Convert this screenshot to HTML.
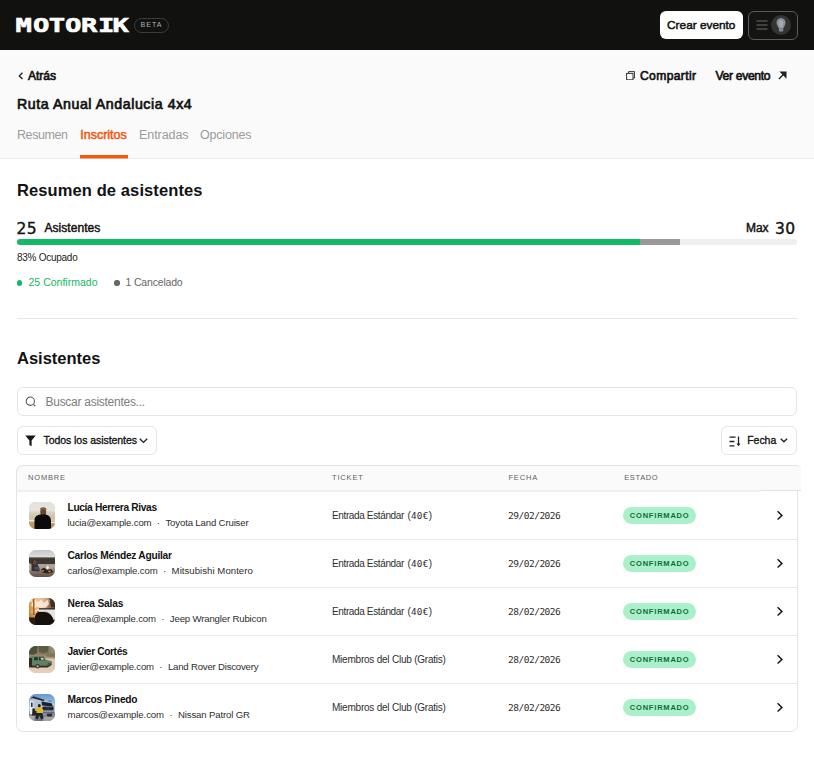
<!DOCTYPE html>
<html lang="es">
<head>
<meta charset="utf-8">
<title>Motorik – Inscritos</title>
<style>
*{box-sizing:border-box;margin:0;padding:0}
html,body{width:814px;height:760px;overflow:hidden;background:#fff}
body{font-family:"Liberation Sans",Arial,sans-serif;color:#121212;position:relative}
.mono{font-family:"DejaVu Sans Mono","Liberation Mono",monospace}
.num{font-family:"DejaVu Sans","Liberation Sans",sans-serif}
svg{display:block}
.md{-webkit-text-stroke:.5px currentColor}
.md3{-webkit-text-stroke:.32px currentColor}
.abs{position:absolute;white-space:nowrap}

/* top bar */
.topbar{position:absolute;left:0;top:0;width:814px;height:50px;background:#111110}
.logo{position:absolute;left:0;top:0;width:200px;height:50px}
.logo text{font-family:"DejaVu Sans Mono","Liberation Mono",monospace;font-weight:700;font-size:18.8px;fill:#fff;stroke:#fff;stroke-width:.55px;stroke-linejoin:miter}
.beta{position:absolute;left:134px;top:17.6px;width:35px;height:15px;border:1px solid #3d3d3b;border-radius:8px;color:#b0b0ae;font-size:7px;line-height:12.4px;text-align:center;white-space:nowrap}
.btn-create{position:absolute;left:660px;top:11px;width:82.5px;height:28px;border-radius:6px;background:#fff;color:#111;font-size:11.8px;line-height:28.8px;text-align:center;white-space:nowrap}
.btn-menu{position:absolute;left:748px;top:11px;width:49.5px;height:28.5px;border-radius:6px;border:1px solid #5c5c5a;background:#141413}
.btn-menu .bars{position:absolute;left:6.5px;top:8.2px}
.btn-menu .av{position:absolute;left:22px;top:2.8px;width:20px;height:20px;border-radius:50%;background:#343432;overflow:hidden}

/* sub header */
.subhead{position:absolute;left:0;top:50px;width:814px;height:109px;background:#fafafa;border-bottom:1px solid #ececec}
.subhead .t{position:absolute;white-space:nowrap;font-size:12.1px;line-height:16px;-webkit-text-stroke:.65px currentColor}
.title{position:absolute;left:17px;top:45.1px;font-size:14.2px;line-height:18px;white-space:nowrap;-webkit-text-stroke:.7px currentColor}
.tabs{position:absolute;left:17px;top:76.6px;height:33px;font-size:12.5px;line-height:16px;white-space:nowrap}
.tabs a{position:absolute;top:0;display:block;color:#9b9b9b;height:33px;text-decoration:none}
.tabs a.on{color:#f2560c}
.tabs .ul{position:absolute;left:63px;top:28.4px;width:48px;height:4px;background:linear-gradient(#f55a0a 0,#f55a0a 3px,#f4a57c 3px,#f4a57c 4px)}

/* main */
h2{position:absolute;left:17px;font-size:16.5px;line-height:22px;font-weight:700;white-space:nowrap}
.bar{position:absolute;left:17px;top:239px;width:780px;height:6px;border-radius:3px;background:#efefef;overflow:hidden}
.bar i{position:absolute;top:0;height:6px}
.hr{position:absolute;left:17px;top:318px;width:780px;height:1px;background:#e6e6e6}
.dotc{position:absolute;width:5.4px;height:5.4px;border-radius:50%}

.search{position:absolute;left:17px;top:387px;width:780px;height:29px;border:1px solid #e5e5e5;border-radius:6px;background:#fff}
.search .ph{position:absolute;left:27.5px;top:7.3px;font-size:12px;line-height:15px;color:#7d7d7d;white-space:nowrap}
.search svg{position:absolute;left:7.2px;top:8.2px}
.fbtn{position:absolute;top:426.4px;height:28.6px;border:1px solid #e5e5e5;border-radius:6px;background:#fff;font-size:10.5px;line-height:14px;white-space:nowrap}
.fbtn .tx{position:absolute;top:5.5px}
.fbtn svg{position:absolute}

/* table */
.tbl{position:absolute;left:16px;top:465px;width:782px;height:267px;border:1px solid #e4e4e4;border-radius:7px}
.thead{position:absolute;left:-1px;top:-1px;width:745px;height:26px;background:#fafafa;border:1px solid #e4e4e4;border-right:none;border-bottom-color:#ededed;border-radius:7px 0 0 0;box-shadow:0 1px 0 #f0f0f0}
.thead2{position:absolute;left:744px;top:-1px;width:40px;height:26px;background:#fafafa;border:1px solid #e4e4e4;border-left:none;border-right:none;border-bottom-color:#e2e2e2;border-radius:0 5px 0 0}
.th{position:absolute;top:7.3px;font-size:7.5px;line-height:10px;color:#5e5e5e;white-space:nowrap}
.row{position:absolute;left:0;width:780px;height:49px;border-bottom:1px solid #e9e9e9}
.row:last-child{border-bottom:none}
.row .avt{position:absolute;left:11.5px;top:11px;width:26.8px;height:26.7px;border-radius:7px;overflow:hidden;background:#bbb}
.row .nm{position:absolute;left:50.5px;top:9.9px;font-size:10.2px;line-height:14px;white-space:nowrap;font-weight:700}
.row .em{position:absolute;left:50.5px;top:25.2px;font-size:9.6px;line-height:13px;color:#2e2e2e;white-space:nowrap}
.row .dot{display:inline-block;width:14px;text-align:center}
.row .tk{position:absolute;left:315px;top:17.5px;font-size:10px;line-height:13px;color:#2e2e2e;white-space:nowrap}
.row .dt{position:absolute;left:491px;top:17.5px;font-size:9.5px;line-height:13px;color:#2e2e2e;white-space:nowrap}
.row .bd{position:absolute;left:606.4px;top:16px;width:72.5px;height:16.8px;border-radius:9px;background:#aaf0c9;color:#136b42;font-size:7.5px;font-weight:700;line-height:17px;text-align:center;white-space:nowrap}
.row .ch{position:absolute;left:758.9px;top:19px}
</style>
</head>
<body>

<header class="topbar">
  <svg class="logo" width="200" height="50" viewBox="0 0 200 50"><text id="logo" y="0" x="10.70 22.77 33.63 44.80 55.88 67.56 77.61" transform="translate(0 32) scale(1.45 1)">MOTORIK</text></svg>
  <div class="beta"><span id="beta" style="letter-spacing:1.044px">BETA</span></div>
  <div class="btn-create md"><span id="crear" style="letter-spacing:0.009px">Crear evento</span></div>
  <div class="btn-menu">
    <svg class="bars" width="12" height="10" viewBox="0 0 12 10"><path d="M0.5 1h11M0.5 5h11M0.5 9h11" stroke="#6d6d6b" stroke-width="1.1" fill="none"/></svg>
    <div class="av"><svg width="20" height="20" viewBox="0 0 20 20"><path d="M10 3C13 3 14.5 5.2 14.5 7.6C14.5 10 13 11.2 12.6 13H7.6C7.2 11.2 5.5 10 5.5 7.6C5.5 5.2 7 3 10 3Z" fill="#8592a0"/><path d="M7.6 7C8.4 5.4 9.4 5 10.4 5.2C11.6 5.4 12.4 6.6 12.4 8C12.2 9.6 11.4 10.6 11.2 12.2H9C8.8 10.8 7.4 9.4 7.6 7Z" fill="#a2abb6"/><rect x="7.9" y="13" width="4.4" height="3.5" rx="1" fill="#8a9099"/><path d="M6.3 8.6C6.6 10.2 7.6 11 8 12.6M13.6 7.4C13.6 9.4 12.6 10.6 12.4 12.4" stroke="#c8863e" stroke-width=".7" fill="none"/><path d="M8.2 14.2H12M8.4 15.4H11.8" stroke="#5d84b8" stroke-width=".6"/></svg></div>
  </div>
</header>

<section class="subhead">
  <svg class="abs" style="left:18.3px;top:21.8px" width="6" height="8" viewBox="0 0 6 8"><path d="M4.5 0.8 L1.3 3.9 L4.5 7" fill="none" stroke="#121212" stroke-width="1.25"/></svg>
  <div class="t" style="left:28px;top:17.8px"><span id="atras" style="letter-spacing:-0.045px">Atrás</span></div>
  <svg class="abs" style="left:625.7px;top:20.7px" width="9.2" height="9.4" viewBox="0 0 9.2 9.4"><path d="M2.6 2.3V0.6H8.6V7H7" fill="none" stroke="#333" stroke-width="1"/><rect x="0.6" y="2.4" width="6.4" height="6.4" fill="none" stroke="#333" stroke-width="1"/></svg>
  <div class="t" style="left:640px;top:18px"><span id="compartir" style="letter-spacing:0.370px">Compartir</span></div>
  <div class="t" style="left:715.5px;top:18px"><span id="verevento" style="letter-spacing:-0.308px">Ver evento</span></div>
  <svg class="abs" style="left:778px;top:20.8px" width="9.4" height="9" viewBox="0 0 10 10"><path d="M1.3 0.6H9.2V8.6Z" fill="#222"/><path d="M0.8 8.9L5.8 3.9" stroke="#222" stroke-width="1.5" fill="none"/></svg>
  <div class="title"><span id="title" style="letter-spacing:0.565px">Ruta Anual Andalucia 4x4</span></div>
  <nav class="tabs">
    <a style="left:0"><span id="tab0" style="letter-spacing:-0.419px">Resumen</span></a>
    <a class="on md" style="left:63.3px"><span id="tab1" style="letter-spacing:-0.007px">Inscritos</span></a>
    <a style="left:122px"><span id="tab2" style="letter-spacing:-0.062px">Entradas</span></a>
    <a style="left:183px"><span id="tab3" style="letter-spacing:-0.203px">Opciones</span></a>
    <div class="ul"></div>
  </nav>
</section>

<main>
  <h2 style="top:179px"><span id="h2a" style="letter-spacing:0.104px">Resumen de asistentes</span></h2>
  <div class="abs num" style="left:16.6px;top:218.6px;font-size:15.5px;line-height:20px;-webkit-text-stroke:.4px currentColor"><span id="n25" style="letter-spacing:0.300px">25</span></div>
  <div class="abs" style="left:44.5px;top:220.3px;font-size:12px;line-height:16px;-webkit-text-stroke:.45px currentColor"><span id="asis" style="letter-spacing:0.043px">Asistentes</span></div>
  <div class="abs" style="left:746px;top:220.3px;font-size:12px;line-height:16px;-webkit-text-stroke:.45px currentColor"><span id="max" style="letter-spacing:-0.060px">Max</span></div>
  <div class="abs num" style="left:775px;top:218.6px;font-size:15.5px;line-height:20px;-webkit-text-stroke:.4px currentColor"><span id="n30" style="letter-spacing:0.300px">30</span></div>
  <div class="bar"><i style="left:0;width:623px;background:#14b866"></i><i style="left:623px;width:40px;background:#999"></i></div>
  <div class="abs" style="left:17px;top:252.3px;font-size:10px;line-height:12px;color:#222"><span id="ocup" style="letter-spacing:-0.268px">83% Ocupado</span></div>
  <div class="dotc" style="left:16.9px;top:280.3px;background:#14b866"></div>
  <div class="abs" style="left:28.5px;top:275.8px;font-size:10.5px;line-height:13px;color:#14b866"><span id="conf" style="letter-spacing:0.010px">25 Confirmado</span></div>
  <div class="dotc" style="left:114.3px;top:280.3px;background:#666"></div>
  <div class="abs" style="left:125.5px;top:275.8px;font-size:10.5px;line-height:13px;color:#666"><span id="canc" style="letter-spacing:-0.176px">1 Cancelado</span></div>
  <div class="hr"></div>

  <h2 style="top:347px"><span id="h2b" style="letter-spacing:-0.007px">Asistentes</span></h2>
  <div class="search">
    <svg width="12" height="12" viewBox="0 0 12 12"><circle cx="5.3" cy="5.2" r="4.15" fill="none" stroke="#555" stroke-width="1.05"/><path d="M8.3 8.2L10.3 10.2" stroke="#555" stroke-width="1.1"/></svg>
    <div class="ph"><span id="ph" style="letter-spacing:-0.270px">Buscar asistentes...</span></div>
  </div>
  <div class="fbtn" style="left:17px;width:140px">
    <svg style="left:6.8px;top:7.7px" width="11" height="12" viewBox="0 0 11 12"><path d="M0.3 0.5H10.7L6.6 5.6V11.2L4.4 9.9V5.6Z" fill="#161616"/></svg>
    <div class="tx md3" style="left:25.5px"><span id="todos" style="letter-spacing:-0.057px">Todos los asistentes</span></div>
    <svg style="left:121px;top:10.3px" width="9" height="6" viewBox="0 0 9 6"><path d="M0.8 0.8L4.5 4.4L8.2 0.8" fill="none" stroke="#222" stroke-width="1.35"/></svg>
  </div>
  <div class="fbtn" style="left:721px;width:76px">
    <svg style="left:7px;top:8.5px" width="12" height="11" viewBox="0 0 12 11"><path d="M0.5 1.2H6.6M0.5 5.5H5.4M0.5 9.8H5.4" stroke="#222" stroke-width="1.3" fill="none"/><path d="M9.5 0.5V9.2" stroke="#222" stroke-width="1.3" fill="none"/><path d="M7.5 7.6L9.5 10.2L11.5 7.6Z" fill="#222"/></svg>
    <div class="tx md3" style="left:25.2px"><span id="fecha" style="letter-spacing:-0.027px">Fecha</span></div>
    <svg style="left:58.3px;top:10.6px" width="8" height="5" viewBox="0 0 8 5"><path d="M0.7 0.7L3.9 3.8L7.1 0.7" fill="none" stroke="#222" stroke-width="1.35"/></svg>
  </div>

  <div class="tbl">
    <div class="thead">
      <div class="th" style="left:11px"><span id="th0" style="letter-spacing:0.814px">NOMBRE</span></div>
      <div class="th" style="left:315px"><span id="th1" style="letter-spacing:0.826px">TICKET</span></div>
      <div class="th" style="left:491.4px"><span id="th2" style="letter-spacing:0.842px">FECHA</span></div>
      <div class="th" style="left:607.2px"><span id="th3" style="letter-spacing:0.641px">ESTADO</span></div>
    </div>
    <div class="thead2"></div>

    <div class="row" style="top:25px">
      <div class="avt"><svg width="27" height="27" viewBox="0 0 27 27" preserveAspectRatio="none"><defs><linearGradient id="a1" x1="0" y1="0" x2="0" y2="1"><stop offset="0" stop-color="#e2e2df"/><stop offset=".3" stop-color="#e6e4df"/><stop offset=".42" stop-color="#d6cdbb"/><stop offset=".58" stop-color="#cfc3a9"/><stop offset=".7" stop-color="#d8cdb6"/><stop offset=".75" stop-color="#c2a16a"/><stop offset="1" stop-color="#b38a4a"/></linearGradient></defs><rect width="27" height="27" fill="url(#a1)"/><rect x="0" y="18.2" width="6" height="1" fill="#f4f1ea"/><rect x="22" y="20" width="5" height="1" fill="#f0ece2"/><path d="M5.5 27V18.5C5.5 14.5 8.5 13 11.5 12.6L13.5 11.5L16.5 12.6C20 13.2 21.8 15 22 19V27Z" fill="#0b0b0c"/><ellipse cx="14.2" cy="9.8" rx="3" ry="3.4" fill="#6a452a"/><path d="M11 7.6C11.2 5.6 13 5 14.6 5.3C16.4 5.6 17.6 6.6 17.8 7.5L14.8 7.9Z" fill="#7a5a36"/><path d="M11.4 10C11.8 13 14.8 13.8 16.6 11L16.2 13.4L12.6 14Z" fill="#120c08"/></svg></div>
      <div class="nm"><span id="nm0" style="letter-spacing:-0.339px">Lucía Herrera Rivas</span></div>
      <div class="em"><span id="em0" style="letter-spacing:-0.152px">lucia@example.com</span><span class="dot" id="dot0">·</span><span id="vh0" style="letter-spacing:-0.148px">Toyota Land Cruiser</span></div>
      <div class="tk"><span id="tk0" style="letter-spacing:-0.369px">Entrada Estándar</span> <span id="tp0" style="margin-left:.9px">(<span class="mono" style="font-size:9.3px;letter-spacing:0.300px">40€</span>)</span></div>
      <div class="dt mono"><span id="dt0" style="letter-spacing:-0.489px">29/02/2026</span></div>
      <div class="bd"><span id="bd0" style="letter-spacing:0.803px">CONFIRMADO</span></div>
      <svg class="ch" width="8" height="11" viewBox="0 0 8 11"><path d="M1.6 1.3 L5.9 5.45 L1.6 9.5" fill="none" stroke="#111" stroke-width="1.45" stroke-linecap="butt" stroke-linejoin="miter"/></svg>
    </div>
    <div class="row" style="top:73px">
      <div class="avt"><svg width="27" height="27" viewBox="0 0 27 27" preserveAspectRatio="none"><defs><linearGradient id="a2" x1="0" y1="0" x2="0" y2="1"><stop offset="0" stop-color="#c0c9cc"/><stop offset=".2" stop-color="#d8d8d5"/><stop offset=".245" stop-color="#eadfd4"/><stop offset=".29" stop-color="#5a544d"/><stop offset=".33" stop-color="#3a3733"/><stop offset=".5" stop-color="#3d3a36"/><stop offset=".54" stop-color="#b0a69e"/><stop offset=".66" stop-color="#aba097"/><stop offset=".78" stop-color="#8a7b70"/><stop offset=".9" stop-color="#6e5e54"/><stop offset="1" stop-color="#65564d"/></linearGradient></defs><rect width="27" height="27" fill="url(#a2)"/><path d="M2.5 21V15C2.8 11.5 4.5 9.8 6 10C7.8 10.2 8.6 12.5 8.8 15L10.5 18V21.5Z" fill="#35322f"/><path d="M0 13H1.2V21H0Z" fill="#c9c2ba" opacity=".7"/><path d="M4.5 10.5C6 9.5 7.6 10.5 7.8 13L6 15L4.2 14Z" fill="#6b4a35"/><path d="M5.5 17H9.6L10 19.6H5.5Z" fill="#3f587a"/><path d="M12 19.5L15 17.5L18 20L22 19L24.5 22L19 23.5L13 22.5Z" fill="#2a2320"/><path d="M17 18L18.8 15.2L20 17.4L19 19.5Z" fill="#f4f0ea"/><path d="M12.5 20.5L14.5 19.8L15 21.5L13 22ZM19 21L21.5 20.3L22 21.8L19.8 22.4Z" fill="#d9742e"/></svg></div>
      <div class="nm"><span id="nm1" style="letter-spacing:-0.248px">Carlos Méndez Aguilar</span></div>
      <div class="em"><span id="em1" style="letter-spacing:-0.128px">carlos@example.com</span><span class="dot" id="dot1">·</span><span id="vh1" style="letter-spacing:0.040px">Mitsubishi Montero</span></div>
      <div class="tk"><span id="tk1" style="letter-spacing:-0.369px">Entrada Estándar</span> <span id="tp1" style="margin-left:.9px">(<span class="mono" style="font-size:9.3px;letter-spacing:0.300px">40€</span>)</span></div>
      <div class="dt mono"><span id="dt1" style="letter-spacing:-0.489px">29/02/2026</span></div>
      <div class="bd"><span id="bd1" style="letter-spacing:0.803px">CONFIRMADO</span></div>
      <svg class="ch" width="8" height="11" viewBox="0 0 8 11"><path d="M1.6 1.3 L5.9 5.45 L1.6 9.5" fill="none" stroke="#111" stroke-width="1.45" stroke-linecap="butt" stroke-linejoin="miter"/></svg>
    </div>
    <div class="row" style="top:121px">
      <div class="avt"><svg width="27" height="27" viewBox="0 0 27 27" preserveAspectRatio="none"><defs><linearGradient id="a3" x1="0" y1="0" x2="1" y2="0"><stop offset="0" stop-color="#c9781c"/><stop offset=".25" stop-color="#e8aa62"/><stop offset=".55" stop-color="#d49a5c"/><stop offset=".8" stop-color="#6a4526"/><stop offset="1" stop-color="#2a1c12"/></linearGradient><linearGradient id="a3b" x1="0" y1="0" x2="0" y2="1"><stop offset="0" stop-color="#fff" stop-opacity=".3"/><stop offset=".4" stop-color="#fff" stop-opacity=".15"/><stop offset="1" stop-color="#000" stop-opacity=".3"/></linearGradient></defs><rect width="27" height="27" fill="url(#a3)"/><rect width="27" height="27" fill="url(#a3b)"/><path d="M5.5 1L9 4L12 1.5L15 5L18.5 1.5L20 6L17 9.5L12 10L8 9L5 10.5L2 7Z" fill="#fdf3e4" opacity=".8"/><circle cx="2" cy="3" r="1.1" fill="#fff" opacity=".7"/><circle cx="7" cy="13" r="1.3" fill="#fff" opacity=".6"/><circle cx="20.5" cy="2.5" r="1" fill="#fff" opacity=".6"/><circle cx="3" cy="14" r="1" fill="#f0c890" opacity=".8"/><path d="M20 0H27V9H22Z" fill="#2a1a0e" opacity=".7"/><rect x="4" y="1" width="1.5" height="16" fill="#a85e14"/><path d="M8 11H27V22H24.5C22.5 16 19 13.6 15 13.6H8Z" fill="#e4e4e1"/><path d="M10 10.2H27V11.4H10Z" fill="#26262a"/><path d="M6 27V20C6 16 8 14 10.5 14H15C20 14 23 18 24.6 22L25.6 27Z" fill="#15110e"/><path d="M0 19.5H6.5V27H0Z" fill="#2a1d12"/><circle cx="8.8" cy="13.6" r=".8" fill="#d02a1a"/></svg></div>
      <div class="nm"><span id="nm2" style="letter-spacing:-0.198px">Nerea Salas</span></div>
      <div class="em"><span id="em2" style="letter-spacing:-0.177px">nerea@example.com</span><span class="dot" id="dot2">·</span><span id="vh2" style="letter-spacing:-0.159px">Jeep Wrangler Rubicon</span></div>
      <div class="tk"><span id="tk2" style="letter-spacing:-0.369px">Entrada Estándar</span> <span id="tp2" style="margin-left:.9px">(<span class="mono" style="font-size:9.3px;letter-spacing:0.300px">40€</span>)</span></div>
      <div class="dt mono"><span id="dt2" style="letter-spacing:-0.489px">28/02/2026</span></div>
      <div class="bd"><span id="bd2" style="letter-spacing:0.803px">CONFIRMADO</span></div>
      <svg class="ch" width="8" height="11" viewBox="0 0 8 11"><path d="M1.6 1.3 L5.9 5.45 L1.6 9.5" fill="none" stroke="#111" stroke-width="1.45" stroke-linecap="butt" stroke-linejoin="miter"/></svg>
    </div>
    <div class="row" style="top:169px">
      <div class="avt"><svg width="27" height="27" viewBox="0 0 27 27" preserveAspectRatio="none"><defs><linearGradient id="a4" x1="0" y1="0" x2="0" y2="1"><stop offset="0" stop-color="#6f6a58"/><stop offset=".3" stop-color="#8a7e66"/><stop offset=".42" stop-color="#a79378"/><stop offset=".5" stop-color="#dcc6ae"/><stop offset="1" stop-color="#e4d0bc"/></linearGradient></defs><rect width="27" height="27" fill="url(#a4)"/><path d="M0 0H8V7L4 9L0 8Z" fill="#3f4a36" opacity=".85"/><path d="M10 0H19V6L14 7.5L10 6Z" fill="#55583f" opacity=".8"/><path d="M20 1H27V8L22 7Z" fill="#a08a80" opacity=".8"/><path d="M16 7H27V11.5L18 10.5Z" fill="#7d7a58"/><path d="M0.5 11L2.5 10H14.5L17 13.8L22.8 15.2L23.2 18.8L21.5 19.8H1Z" fill="#5e8262"/><path d="M5.2 11.3H8.8V14.2H5.2ZM10 11.3H14L16 14.2H10Z" fill="#26302a"/><path d="M11.5 11.8H14L15.2 13.8H12Z" fill="#d9c9a0"/><path d="M0 12H3V20.5H0Z" fill="#2c2a22"/><path d="M0 19.5H21L19 21.5H0Z" fill="#3a2a1e"/><circle cx="8.6" cy="20.3" r="2.3" fill="#3a3a38"/><circle cx="8.6" cy="20.3" r="1.1" fill="#b9b6b0"/><circle cx="20.2" cy="18.6" r="1.9" fill="#4a4a46"/></svg></div>
      <div class="nm"><span id="nm3" style="letter-spacing:-0.372px">Javier Cortés</span></div>
      <div class="em"><span id="em3" style="letter-spacing:-0.183px">javier@example.com</span><span class="dot" id="dot3">·</span><span id="vh3" style="letter-spacing:-0.199px">Land Rover Discovery</span></div>
      <div class="tk"><span id="tk3" style="letter-spacing:-0.223px">Miembros del Club (Gratis)</span></div>
      <div class="dt mono"><span id="dt3" style="letter-spacing:-0.489px">28/02/2026</span></div>
      <div class="bd"><span id="bd3" style="letter-spacing:0.803px">CONFIRMADO</span></div>
      <svg class="ch" width="8" height="11" viewBox="0 0 8 11"><path d="M1.6 1.3 L5.9 5.45 L1.6 9.5" fill="none" stroke="#111" stroke-width="1.45" stroke-linecap="butt" stroke-linejoin="miter"/></svg>
    </div>
    <div class="row" style="top:217px">
      <div class="avt"><svg width="27" height="27" viewBox="0 0 27 27" preserveAspectRatio="none"><defs><linearGradient id="a5" x1="0" y1="0" x2="0" y2="1"><stop offset="0" stop-color="#6398d2"/><stop offset=".35" stop-color="#9fc0e4"/><stop offset=".6" stop-color="#cbd3dc"/><stop offset=".72" stop-color="#8c8f96"/><stop offset="1" stop-color="#6d717a"/></linearGradient></defs><rect width="27" height="27" fill="url(#a5)"/><path d="M1 5L4 2.5L14 5L21 8.5L25.5 11L25 18L22 19.5H7L1 16Z" fill="#b4c2d6"/><path d="M1 4.6L4.5 2.2L15.5 5.8L15 7.2L4 4.2Z" fill="#1f2a3a"/><path d="M12.5 7.6L22.5 9.3L24 12.4L13 11.4Z" fill="#1c222c"/><path d="M14 12.6H24.6V16.5H14Z" fill="#2b323e"/><path d="M1 7H4.5V20H1Z" fill="#e8edf4"/><path d="M2 8.5H3.6V13H2Z" fill="#2a3340"/><path d="M3.5 14.5C5 13.5 6.5 15 6.5 18V21.5H3Z" fill="#20242c"/><path d="M18 19.5H23V22L20.5 22.8L18 22Z" fill="#262a32"/><path d="M13 13.5H17V14.8H13ZM21.5 14H24V15.2H21.5Z" fill="#14181e"/><path d="M19.5 6.2H22.5V8H19.5Z" fill="#5a9a94"/><ellipse cx="10.3" cy="11.8" rx="1.5" ry="1.8" fill="#2a1c14"/><path d="M6.5 15.5C7 13.8 9 13.4 10.5 13.6C12.5 13.6 13.8 14.2 14 16L13.5 19H7.2Z" fill="#e3b81e"/><path d="M7 19H13.5L14.5 24.5L12 25.5L10.5 21.5L8.5 25.5L6.5 24.5Z" fill="#1d2230"/><path d="M0 22H6L5 27H0ZM15 23H27V27H14Z" fill="#c8bfb2" opacity=".6"/><path d="M5 17H7.5V21H4.5Z" fill="#20242c"/><path d="M14 17.5H25V19.5H14Z" fill="#5f6b7c"/></svg>
</div>
      <div class="nm"><span id="nm4" style="letter-spacing:-0.197px">Marcos Pinedo</span></div>
      <div class="em"><span id="em4" style="letter-spacing:-0.097px">marcos@example.com</span><span class="dot" id="dot4">·</span><span id="vh4" style="letter-spacing:-0.148px">Nissan Patrol GR</span></div>
      <div class="tk"><span id="tk4" style="letter-spacing:-0.223px">Miembros del Club (Gratis)</span></div>
      <div class="dt mono"><span id="dt4" style="letter-spacing:-0.489px">28/02/2026</span></div>
      <div class="bd"><span id="bd4" style="letter-spacing:0.803px">CONFIRMADO</span></div>
      <svg class="ch" width="8" height="11" viewBox="0 0 8 11"><path d="M1.6 1.3 L5.9 5.45 L1.6 9.5" fill="none" stroke="#111" stroke-width="1.45" stroke-linecap="butt" stroke-linejoin="miter"/></svg>
    </div>
  </div>
</main>
</body>
</html>
